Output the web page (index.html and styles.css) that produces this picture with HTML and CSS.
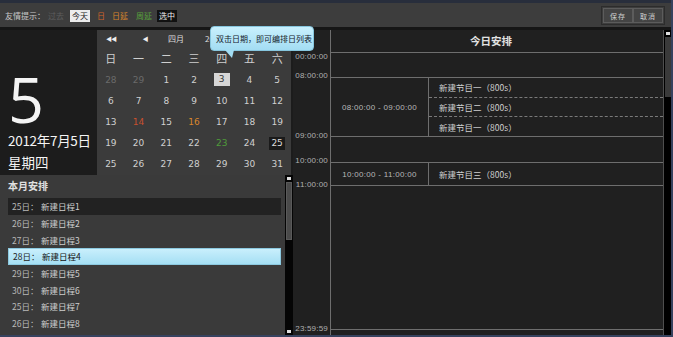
FILE: index.html
```html
<!DOCTYPE html>
<html lang="zh-CN">
<head>
<meta charset="utf-8">
<title>日程安排</title>
<link rel="stylesheet" href="styles.css">
</head>
<body>
<div class="app">
  <header class="topbar">
    <div class="legend">
      <span class="lbl">友情提示：</span>
      <span class="tag past">过去</span>
      <span class="tag today">今天</span>
      <span class="tag day">日</span>
      <span class="tag dayext">日延</span>
      <span class="tag weekext">周延</span>
      <span class="tag sel">选中</span>
    </div>
    <div class="btns"><button class="btn">保存</button><button class="btn">取消</button></div>
  </header>

  <main class="main">
    <section class="left">
      <div class="top">
        <div class="today-card">
          <div class="big">5</div>
          <div class="date-line">2012年7月5日</div>
          <div class="week-line">星期四</div>
        </div>
        <div class="cal">
          <div class="cal-head">
            <span class="arr">◀◀</span>
            <span class="arr">◀</span>
            <span class="mon">四月</span>
            <span class="yr">2012年</span>
            <span class="arr">▶</span>
            <span class="arr">▶▶</span>
          </div>
          <div class="cal-week">
            <span>日</span><span>一</span><span>二</span><span>三</span><span>四</span><span>五</span><span>六</span>
          </div>
          <div class="cal-days">
            <span class="dim">28</span><span class="dim">29</span><span>1</span><span>2</span><span class="cur"><b>3</b></span><span>4</span><span>5</span>
            <span>6</span><span>7</span><span>8</span><span>9</span><span>10</span><span>11</span><span>12</span>
            <span>13</span><span class="red">14</span><span>15</span><span class="orange">16</span><span>17</span><span>18</span><span>19</span>
            <span>19</span><span>20</span><span>21</span><span>22</span><span class="green">23</span><span>24</span><span class="picked"><b>25</b></span>
            <span>25</span><span>26</span><span>27</span><span>28</span><span>29</span><span>30</span><span>31</span>
          </div>
        </div>
      </div>

      <div class="month">
        <div class="month-body">
          <h3 class="month-title">本月安排</h3>
          <ul class="plan-list">
            <li class="plan dark"><span class="d">25日：</span><span>新建日程1</span></li>
            <li class="plan"><span class="d">26日：</span><span>新建日程2</span></li>
            <li class="plan"><span class="d">27日：</span><span>新建日程3</span></li>
            <li class="plan active"><span class="d">28日：</span><span>新建日程4</span></li>
            <li class="plan"><span class="d">29日：</span><span>新建日程5</span></li>
            <li class="plan"><span class="d">30日：</span><span>新建日程6</span></li>
            <li class="plan"><span class="d">25日：</span><span>新建日程7</span></li>
            <li class="plan"><span class="d">26日：</span><span>新建日程8</span></li>
          </ul>
        </div>
        <div class="vscroll">
          <i class="sarrow"></i>
          <i class="thumb"></i>
          <i class="grow"></i>
          <i class="sarrow"></i>
        </div>
      </div>
    </section>

    <section class="right">
      <div class="times">
        <span class="tl t0">00:00:00</span>
        <span class="tl t8">08:00:00</span>
        <span class="tl t9">09:00:00</span>
        <span class="tl t10">10:00:00</span>
        <span class="tl t11">11:00:00</span>
        <span class="tl t24">23:59:59</span>
      </div>
      <div class="sched">
        <div class="sched-title">今日安排</div>
        <div class="row gap-a"></div>
        <div class="row block b1">
          <div class="range">08:00:00 - 09:00:00</div>
          <div class="items">
            <div class="item">新建节目一（800s）</div>
            <div class="item">新建节目二（800s）</div>
            <div class="item">新建节目一（800s）</div>
          </div>
        </div>
        <div class="row gap-b"></div>
        <div class="row block b2">
          <div class="range">10:00:00 - 11:00:00</div>
          <div class="items">
            <div class="item">新建节目三（800s）</div>
          </div>
        </div>
        <div class="row gap-c"></div>
      </div>
      <div class="rscroll">
        <i class="sarrow"></i>
        <i class="rthumb"></i>
      </div>
    </section>
  </main>

  <div class="tip">双击日期，即可编排日列表</div>
</div>
</body>
</html>
```

FILE: styles.css
```css
* { box-sizing: border-box; margin: 0; padding: 0; }
html, body { width: 673px; height: 337px; overflow: hidden; background: #1e1e1e; }
body { font-family: "Noto Sans CJK SC", "Liberation Sans", sans-serif; color: #ccc; }

.app {
  position: relative;
  width: 673px; height: 337px;
  display: flex; flex-direction: column;
  border-right: 2px solid #36425e;
  border-bottom: 2px solid #36425e;
}

/* top bar */
.topbar {
  height: 30px; flex: none;
  display: flex; align-items: center; justify-content: space-between;
  background: #3d3d3d;
  border-top: 3px solid #282e3c;
  border-bottom: 3px solid #161616;
  padding: 1px 6px 0 5px;
}
.legend { display: flex; align-items: center; font-size: 8px; line-height: 12px; }
.lbl { color: #c8c8c8; }
.tag { margin-left: 6px; }
.past { color: #5e5e5e; margin-left: 3px; }
.today { background: #ececec; color: #1a1a1a; padding: 0 2px; }
.day { color: #d0642a; margin-left: 7px; }
.dayext { color: #d9862c; margin-left: 7px; }
.weekext { color: #58a23c; margin-left: 8px; }
.sel { background: #111; color: #eee; padding: 0 2px; margin-left: 5px; }

.btns { display: flex; border: 1px solid #2c2c2c; padding: 1px; }
.btn {
  width: 30px; height: 15px;
  background: #444; border: 1px solid #5c5c5c;
  color: #d0d0d0; font: 7px "Noto Sans CJK SC", sans-serif;
  letter-spacing: 1px;
}

/* main */
.main { flex: 1; display: flex; min-height: 0; }
.left { width: 293px; flex: none; display: flex; flex-direction: column; }
.top { height: 145px; display: flex; }

.today-card { width: 97px; background: #1c1c1c; padding-left: 8px; color: #f4f4f4; }
.big { font-family: "Open Sans", "Noto Sans", sans-serif; font-size: 63px; line-height: 63px; margin-top: 37px; }
.date-line { font-size: 13.5px; line-height: 18px; margin-top: 1px; letter-spacing: -0.3px; }
.week-line { font-size: 13.5px; line-height: 18px; margin-top: 4px; }

.cal { width: 196px; background: #3b3b3b; border-right: 2px solid #1c1c1c; }
.cal-head {
  height: 16px; display: grid;
  grid-template-columns: 28px 40px 22px 1fr 27px 27px;
  align-items: center; text-align: center;
  font-size: 8px; color: #ddd;
}
.cal-head .arr { font-size: 6px; letter-spacing: -1px; color: #eee; }
.cal-head .yr { text-align: left; padding-left: 18px; }
.cal-week {
  height: 23px; display: grid; grid-template-columns: repeat(7, 1fr);
  align-items: center; text-align: center; font-size: 11px; color: #cfcfcf;
}
.cal-days {
  height: 106px; display: grid;
  grid-template-columns: repeat(7, 1fr); grid-template-rows: repeat(5, 1fr);
  align-items: center; justify-items: center;
  font-family: "DejaVu Sans", sans-serif; font-size: 9px; color: #d0d0d0;
}
.cal-days .dim { color: #6a6a6a; }
.cal-days .red { color: #c8502e; }
.cal-days .orange { color: #d9862c; }
.cal-days .green { color: #4f9c3a; }
.cal-days b { font-weight: normal; display: block; width: 16px; height: 13px; line-height: 13px; text-align: center; }
.cal-days .cur b { background: #d6d6d6; color: #333; }
.cal-days .picked b { background: #1a1a1a; color: #ddd; }

/* month list */
.month { flex: 1; display: flex; background: #3a3a3a; }
.month-body { flex: 1; padding: 0 4px 0 8px; }
.month-title { height: 23px; line-height: 21px; font-size: 10px; font-weight: bold; color: #e0e0e0; }
.plan-list { list-style: none; }
.plan { height: 16.7px; display: flex; align-items: center; padding-left: 4px; font-size: 8.5px; color: #cfcfcf; }
.plan .d { width: 29px; color: #b8b8b8; }
.plan.dark { background: #222; }
.plan.active { background: linear-gradient(#c9effc, #a5dff4); color: #111; border: 1px solid #8cc9e0; }
.plan.active .d { color: #222; }

.vscroll { width: 8px; background: #050505; display: flex; flex-direction: column; align-items: center; }
.sarrow { display: block; width: 4px; height: 3px; background: #ddd; margin: 2px 0; flex: none; }
.thumb { display: block; width: 6px; height: 58px; background: #4a4a4a; border: 1px solid #5a5a5a; flex: none; }
.grow { flex: 1; }

/* right side */
.right { flex: 1; display: flex; background: #202020; }
.times { width: 38px; flex: none; position: relative; border-right: 1px solid #6e6e6e; }
.tl {
  position: absolute; right: 2px; height: 10px; line-height: 10px;
  font-family: "Liberation Sans", sans-serif; font-size: 8px; color: #b0b0b0;
  letter-spacing: 0.2px;
}
.t0 { top: 22px; }
.t8 { top: 41px; }
.t9 { top: 101px; }
.t10 { top: 126px; }
.t11 { top: 150px; }
.t24 { top: 294px; }

.sched { flex: 1; display: flex; flex-direction: column; }
.sched-title {
  height: 23px; line-height: 22px; text-align: center; padding-right: 12px;
  font-size: 10.5px; font-weight: bold; color: #e2e2e2;
  border-bottom: 1px solid #6e6e6e;
}
.row { border-bottom: 1px solid #6e6e6e; flex: none; }
.gap-a { height: 25px; }
.gap-b { height: 26px; }
.gap-c { height: 144px; }
.block { display: grid; grid-template-columns: 98px 1fr; }
.b1 { height: 59px; }
.b2 { height: 23px; }
.range {
  border-right: 1px solid #6e6e6e;
  display: flex; align-items: center; justify-content: center;
  font-family: "Liberation Sans", sans-serif; font-size: 8px; color: #b8b8b8; letter-spacing: 0.3px;
}
.items { display: flex; flex-direction: column; }
.item { flex: 1; display: flex; align-items: center; padding-left: 10px; font-size: 8.5px; color: #d0d0d0; border-bottom: 1px dashed #7a7a7a; }
.item:last-child { border-bottom: none; }

.rscroll { width: 8px; flex: none; border-left: 1px solid #4e4e4e; background: #000; display: flex; flex-direction: column; align-items: center; }
.rthumb { display: block; width: 6px; height: 60px; background: #3a3a3a; }

/* tooltip */
.tip {
  position: absolute; left: 210px; top: 26px;
  width: 104px; height: 25px;
  padding-left: 5px; line-height: 23px;
  background: linear-gradient(#c8f0fd, #a3ddf3);
  border: 1px solid #86c6de; border-radius: 4px;
  font-size: 8px; color: #14202a; white-space: nowrap;
}
.tip::after {
  content: ""; position: absolute; left: 14px; bottom: -8px;
  border-top: 8px solid #a3ddf3;
  border-left: 7px solid transparent;
  border-right: 2px solid transparent;
}
```
